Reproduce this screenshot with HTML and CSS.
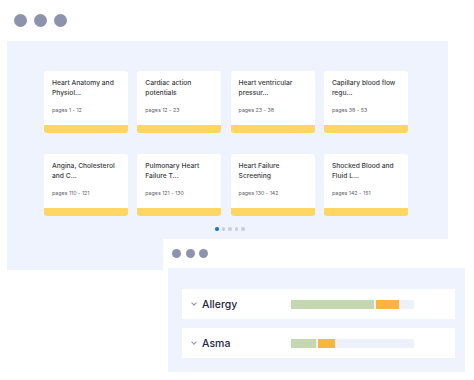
FILE: index.html
```html
<!DOCTYPE html>
<html lang="en">
<head>
  <meta charset="UTF-8">
  <meta name="viewport" content="width=device-width, initial-scale=1.0">
  <title>Course chapters</title>
  <link rel="stylesheet" href="styles.css">
</head>
<body>

  <div class="window chapters">
    <div class="dots">
      <span></span><span></span><span></span>
    </div>
    <div class="panel">
      <div class="grid">
        <div class="card">
          <p class="title">Heart Anatomy and Physiol...</p>
          <p class="pages">pages 1 - 12</p>
        </div>
        <div class="card">
          <p class="title">Cardiac action potentials</p>
          <p class="pages">pages 12 - 23</p>
        </div>
        <div class="card">
          <p class="title">Heart ventricular pressur...</p>
          <p class="pages">pages 23 - 38</p>
        </div>
        <div class="card">
          <p class="title">Capillary blood flow regu...</p>
          <p class="pages">pages 38 - 53</p>
        </div>
        <div class="card">
          <p class="title">Angina, Cholesterol and C...</p>
          <p class="pages">pages 110 - 121</p>
        </div>
        <div class="card">
          <p class="title">Pulmonary Heart Failure T...</p>
          <p class="pages">pages 121 - 130</p>
        </div>
        <div class="card">
          <p class="title">Heart Failure Screening</p>
          <p class="pages">pages 130 - 142</p>
        </div>
        <div class="card">
          <p class="title">Shocked Blood and Fluid L...</p>
          <p class="pages">pages 142 - 151</p>
        </div>
      </div>
      <div class="pager">
        <span class="active"></span><span></span><span></span><span></span><span></span>
      </div>
    </div>
  </div>

  <div class="window topics">
    <div class="dots small">
      <span></span><span></span><span></span>
    </div>
    <div class="panel">
      <div class="row">
        <span class="chevron"></span>
        <span class="name">Allergy</span>
        <div class="bar">
          <span class="done" style="width: 83px"></span>
          <span class="part" style="width: 23px"></span>
        </div>
      </div>
      <div class="row">
        <span class="chevron"></span>
        <span class="name">Asma</span>
        <div class="bar">
          <span class="done" style="width: 25px"></span>
          <span class="part" style="width: 17px"></span>
        </div>
      </div>
    </div>
  </div>

</body>
</html>
```

FILE: styles.css
```css
body {
  margin: 0;
  background: #fff;
  font-family: Inter, "Noto Sans", sans-serif;
  width: 474px;
  height: 380px;
  overflow: hidden;
  position: relative;
}
p {
  margin: 0;
}
.window {
  background: #fff;
}
.dots {
  display: flex;
  gap: 7px;
  padding: 14px 0 0 14px;
  height: 27px;
  box-sizing: border-box;
}
.dots span {
  width: 13px;
  height: 13px;
  border-radius: 50%;
  background: #8e93ad;
}
.chapters .panel {
  margin-left: 7px;
  width: 441px;
  height: 229px;
  margin-top: 14px;
  background: #eef3fd;
  padding: 30px 0 0 37px;
  box-sizing: border-box;
}
.grid {
  display: grid;
  grid-template-columns: repeat(4, 84px);
  column-gap: 9.3px;
  row-gap: 21px;
}
.card {
  height: 62px;
  background: #fff;
  border-radius: 3px;
  border-bottom: 8px solid #fdd663;
  padding: 7px 8px 0;
  box-sizing: border-box;
  overflow: hidden;
}
.title {
  font-size: 6.7px;
  line-height: 10px;
  font-weight: 500;
  color: #3a3d42;
  height: 20px;
}
.pages {
  margin-top: 9px;
  font-size: 5.3px;
  color: #5f6368;
}
.pager {
  display: flex;
  justify-content: center;
  gap: 3px;
  margin-top: 11px;
  padding-right: 32px;
}
.pager span {
  width: 3.5px;
  height: 3.5px;
  border-radius: 50%;
  background: #c9cedc;
}
.pager .active {
  background: #1a73e8;
}
.topics {
  position: absolute;
  left: 163px;
  top: 239px;
  width: 307px;
  height: 141px;
}
.dots.small {
  gap: 4.5px;
  padding: 10px 0 0 9px;
  height: 29px;
}
.dots.small span {
  width: 9px;
  height: 9px;
}
.topics .panel {
  margin-left: 5px;
  width: 297px;
  height: 104px;
  background: #eef3fd;
  padding: 21px 10px 0 14px;
  box-sizing: border-box;
  display: flex;
  flex-direction: column;
  gap: 9px;
}
.row {
  height: 30px;
  background: #fff;
  display: flex;
  align-items: center;
  padding-left: 10px;
}
.chevron {
  width: 3px;
  height: 3px;
  border-right: 1px solid #8e93ad;
  border-bottom: 1px solid #8e93ad;
  transform: rotate(45deg);
  margin: -2px 0 0 0;
}
.name {
  margin-left: 6px;
  width: 89px;
  font-size: 10.5px;
  font-weight: 500;
  color: #1f2544;
}
.bar {
  display: flex;
  gap: 2px;
  width: 123px;
  height: 9px;
  background: #edf2fa;
}
.done {
  background: #c4d7b0;
}
.part {
  background: #fbb441;
}
```
